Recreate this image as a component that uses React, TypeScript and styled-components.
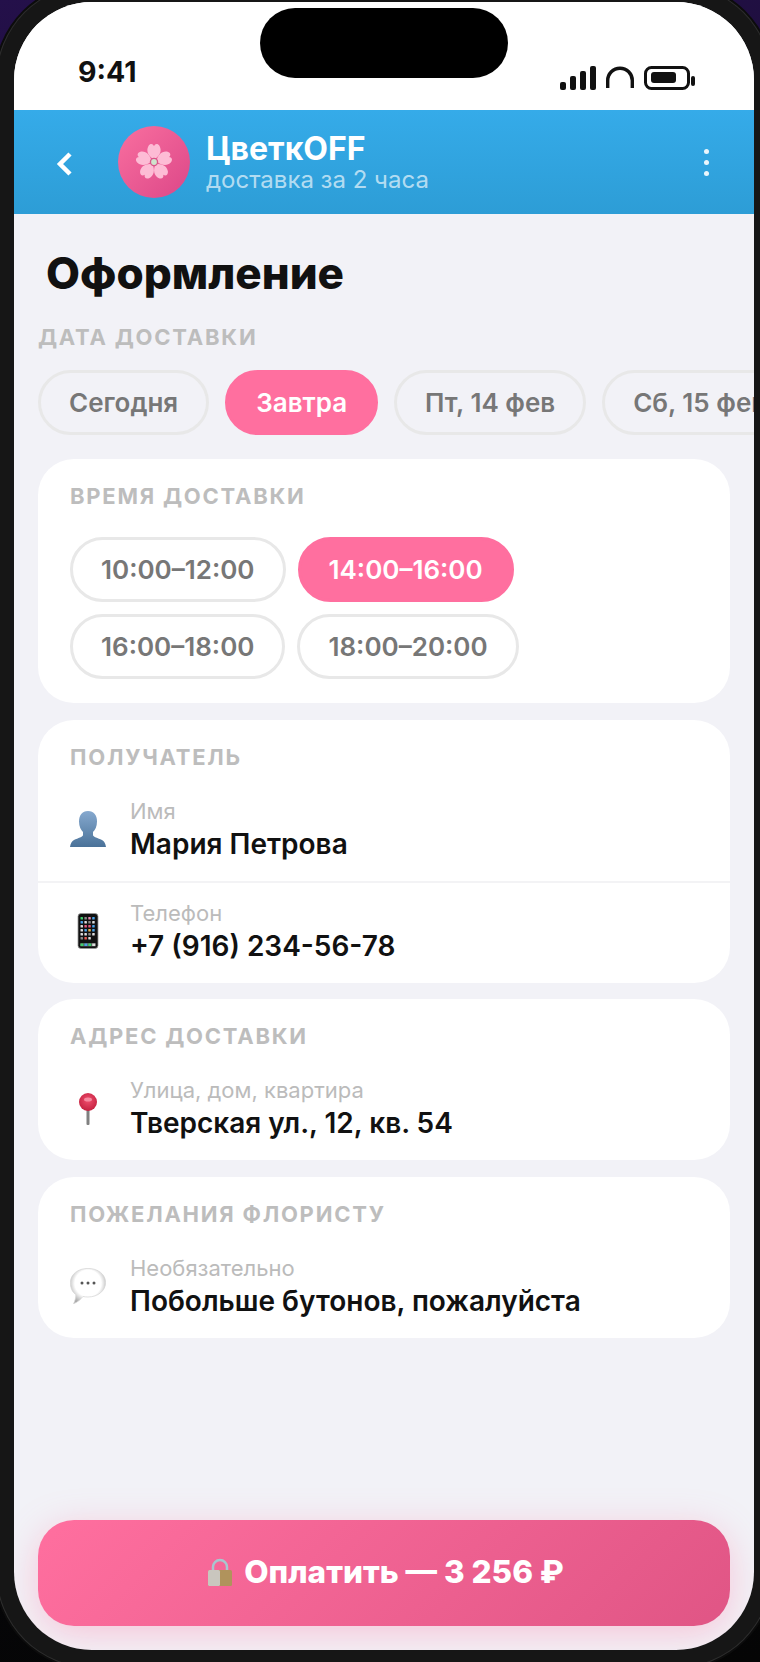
import React from "react";
import styled, { createGlobalStyle } from "styled-components";

const GlobalStyle = createGlobalStyle`
  html, body {
    margin: 0;
    padding: 0;
    background: #0a0a0a;
  }
  * {
    box-sizing: border-box;
  }
`;

const Stage = styled.div`
  width: 760px;
  height: 1662px;
  overflow: hidden;
  padding: 2px 6px 12px 14px;
  background: linear-gradient(172deg, #24104a 0%, #0a0a14 40%, #050505 100%);
  font-family: Inter, "Noto Sans", sans-serif;
`;

const Screen = styled.div`
  position: relative;
  width: 740px;
  height: 1648px;
  border-radius: 78px;
  overflow: hidden;
  display: flex;
  flex-direction: column;
  background: #f2f2f7;
  box-shadow: 0 0 0 17px #161616, 0 0 0 18px #2e2e2e, 0 0 0 20px #0c0c0c;
`;

const Island = styled.div`
  position: absolute;
  top: 6px;
  left: 246px;
  width: 248px;
  height: 70px;
  border-radius: 35px;
  background: #000;
`;

const StatusBar = styled.div`
  height: 108px;
  flex: none;
  background: #fff;
  padding: 0 59px 0 64px;
  display: flex;
  align-items: flex-start;
  justify-content: space-between;
`;

const Clock = styled.span`
  margin-top: 52px;
  font-size: 28.5px;
  line-height: 36px;
  font-weight: 700;
  color: #111;
`;

const StatusIcons = styled.svg`
  margin-top: 64px;
`;

const Header = styled.header`
  height: 104px;
  flex: none;
  display: flex;
  align-items: center;
  padding: 0 42px;
  background: linear-gradient(180deg, #35abe9 0%, #2d9dd6 100%);
`;

const BackIcon = styled.svg`
  flex: none;
  margin: 4px 44px 0 0;
`;

const Avatar = styled.div`
  width: 72px;
  height: 72px;
  flex: none;
  border-radius: 50%;
  display: flex;
  align-items: center;
  justify-content: center;
  background: linear-gradient(135deg, #f96f9f 0%, #dc4788 100%);
`;

const HeaderText = styled.div`
  flex: 1;
  margin: 1px 0 0 16px;
  display: flex;
  flex-direction: column;
`;

const BrandName = styled.span`
  font-size: 32px;
  line-height: 34px;
  font-weight: 700;
  color: #fff;
`;

const BrandSub = styled.span`
  font-size: 24px;
  line-height: 28px;
  color: rgba(255, 255, 255, 0.65);
`;

const MoreDots = styled.div`
  display: flex;
  flex-direction: column;
  gap: 6px;
  margin-right: 3px;

  i {
    display: block;
    width: 5px;
    height: 5px;
    border-radius: 50%;
    background: rgba(255, 255, 255, 0.9);
  }
`;

const Content = styled.main`
  flex: 1;
  display: flex;
  flex-direction: column;
  padding: 0 24px 24px;
`;

const PageTitle = styled.h1`
  margin: 33px 0 0 8px;
  font-size: 44px;
  line-height: 52px;
  font-weight: 800;
  color: #111;
`;

const SectionLabel = styled.div`
  font-size: 22px;
  line-height: 26px;
  font-weight: 700;
  letter-spacing: 1.76px;
  color: #bdbdbd;
`;

const DateLabel = styled(SectionLabel)`
  margin-top: 25px;
`;

const DateRow = styled.div`
  display: flex;
  gap: 16px;
  margin: 20px -24px 24px 0;
  overflow: hidden;
`;

const Chip = styled.div<{ $active?: boolean }>`
  flex: none;
  height: 65px;
  padding: 0 28px;
  display: flex;
  align-items: center;
  border-radius: 33px;
  border: 3px solid ${(p) => (p.$active ? "#ff6f9f" : "#e8e8e8")};
  background: ${(p) => (p.$active ? "#ff6f9f" : "transparent")};
  color: ${(p) => (p.$active ? "#fff" : "#777")};
  font-size: 26px;
  font-weight: 600;
`;

const Card = styled.section`
  background: #fff;
  border-radius: 36px;
  margin-bottom: 16.6px;
  padding-top: 24px;
`;

const CardLabel = styled(SectionLabel)`
  padding: 0 32px;
  margin-bottom: 11px;
`;

const SlotWrap = styled.div`
  display: flex;
  flex-wrap: wrap;
  gap: 12px;
  max-width: 520px;
  padding: 17px 32px 24px;
`;

const Row = styled.div<{ $divided?: boolean }>`
  display: flex;
  align-items: center;
  gap: 24px;
  padding: 16px 32px 19px;
  border-top: ${(p) => (p.$divided ? "2px solid #f3f3f5" : "none")};
`;

const RowIcon = styled.svg`
  flex: none;
`;

const RowText = styled.div`
  display: flex;
  flex-direction: column;
`;

const RowCaption = styled.span`
  font-size: 22px;
  line-height: 29px;
  color: #bbb;
`;

const RowValue = styled.span`
  font-size: 28px;
  line-height: 36px;
  font-weight: 600;
  color: #111;
`;

const PayButton = styled.button`
  margin-top: auto;
  height: 106px;
  flex: none;
  border: none;
  border-radius: 36px;
  padding: 0 0 3px 4px;
  display: flex;
  align-items: center;
  justify-content: center;
  gap: 12px;
  font-family: inherit;
  font-size: 31.5px;
  font-weight: 800;
  color: #fff;
  background: linear-gradient(135deg, #ff6f9f 0%, #e05585 100%);
  box-shadow: 0 8px 36px rgba(255, 111, 159, 0.34);
`;

const Flower = () => (
  <svg width="40" height="40" viewBox="0 0 36 36">
    {[0, 72, 144, 216, 288].map((a) => (
      <path
        key={a}
        d="M18 15.500C13 13 10.500 8 13 3.500 14.800 1 17 1.500 18 3.800 19 1.500 21.200 1 23 3.500 25.500 8 23 13 18 15.500Z"
        fill="#fdbcd5"
        transform={`rotate(${a} 18 18)`}
      />
    ))}
    <circle cx="18" cy="18" r="3.800" fill="#d8568a" />
    <circle cx="18" cy="18" r="2.600" fill="#cfe2cc" />
  </svg>
);

const PersonIcon = () => (
  <RowIcon width="36" height="36" viewBox="0 0 36 36">
    <defs>
      <linearGradient id="bust" x1="0" y1="0" x2="0" y2="1">
        <stop offset="0" stopColor="#86a9cf" />
        <stop offset="1" stopColor="#4a7299" />
      </linearGradient>
    </defs>
    <path
      d="M18 0c6 0 9 4.500 9 10.500 0 5-2 8.500-4 10.500v3c0 2 5 3 9 5 2 1 3.500 3.500 4 7H0c.5-3.500 2-6 4-7 4-2 9-3 9-5v-3c-2-2-4-5.500-4-10.500C9 4.500 12 0 18 0z"
      fill="url(#bust)"
    />
  </RowIcon>
);

const tiles = ["#3ecf6e", "#888", "#e88ab0", "#4aa3e8", "#4aa3e8", "#ddd", "#888", "#ddd", "#ddd", "#e85a80", "#e85a80", "#4aa3e8", "#ddd", "#4aa3e8", "#e8b84a", "#4aa3e8", "#ddd", "#ddd", "#888", "#ddd", "#888", "#e85a50", "#ddd", "#111"];

const PhoneIcon = () => (
  <RowIcon width="36" height="36" viewBox="0 0 36 36">
    <rect x="8" y="0.500" width="20" height="35" rx="3" fill="#111" stroke="#999" strokeWidth="0.8" />
    {tiles.map((c, i) => (
      <rect key={i} x={10.5 + (i % 4) * 3.9} y={4 + Math.floor(i / 4) * 4} width="2.500" height="2.500" rx="0.6" fill={c} />
    ))}
    <rect x="10" y="30" width="16" height="3.500" rx="1" fill="#555" />
    <rect x="10.500" y="30.500" width="3" height="2.500" fill="#3ecf6e" />
    <rect x="14.400" y="30.500" width="3" height="2.500" fill="#4aa3e8" />
    <rect x="18.300" y="30.500" width="3" height="2.500" fill="#3ecf6e" />
    <rect x="22.200" y="30.500" width="3" height="2.500" fill="#ddd" />
  </RowIcon>
);

const PinIcon = () => (
  <RowIcon width="36" height="36" viewBox="0 0 36 36">
    <defs>
      <radialGradient id="ball" cx="0.5" cy="0.4" r="0.6">
        <stop offset="0" stopColor="#f0506f" />
        <stop offset="1" stopColor="#c4203f" />
      </radialGradient>
    </defs>
    <rect x="16.500" y="14" width="3" height="20" rx="1" fill="#808080" />
    <circle cx="18" cy="11" r="9" fill="url(#ball)" />
    <ellipse cx="18" cy="8.500" rx="4" ry="2" fill="#f78aa0" />
  </RowIcon>
);

const BubbleIcon = () => (
  <RowIcon width="36" height="36" viewBox="0 0 36 36">
    <defs>
      <radialGradient id="bubble" cx="0.5" cy="0.42" r="0.6">
        <stop offset="0.62" stopColor="#fff" />
        <stop offset="1" stopColor="#a8a8a8" />
      </radialGradient>
    </defs>
    <path
      d="M18 0.400c10 0 17.600 6 17.600 14.100S28 29 18 29c-2 0-3.500-.2-5-.5C11 31 8 34 3.500 35.800c1.500-3 2.500-6 2.300-9.300C2 24 0.400 19.500 0.400 14.500 0.400 6.400 8 0.400 18 0.400z"
      fill="url(#bubble)"
      stroke="#d4d4d4"
      strokeWidth="0.7"
    />
    <circle cx="12" cy="15" r="1.500" fill="#555" />
    <circle cx="18" cy="15" r="1.500" fill="#555" />
    <circle cx="24" cy="15" r="1.500" fill="#555" />
  </RowIcon>
);

const LockIcon = () => (
  <svg width="24" height="28" viewBox="0 0 24 28">
    <path d="M5 13V9a7 7 0 0 1 14 0v4" fill="none" stroke="#a9c6cf" strokeWidth="2.500" />
    <rect x="0" y="12" width="24" height="16" rx="1.500" fill="#b0935c" />
    <rect x="0" y="12" width="12" height="16" rx="1.500" fill="#c9c6be" />
  </svg>
);

const App = () => {
  return (
    <>
      <GlobalStyle />
      <Stage>
        <Screen>
          <Island />
          <StatusBar>
            <Clock>9:41</Clock>
            <StatusIcons width="135" height="24" viewBox="0 0 135 24">
              <rect x="0" y="16" width="6" height="8" rx="2" fill="#111" />
              <rect x="10" y="10" width="6" height="14" rx="2" fill="#111" />
              <rect x="20" y="5" width="6" height="19" rx="2" fill="#111" />
              <rect x="30" y="0" width="6" height="24" rx="2" fill="#111" />
              <path d="M47.700 22v-7.500a12.300 12.300 0 0 1 24.600 0v7.500" fill="none" stroke="#111" strokeWidth="3.400" />
              <rect x="85.500" y="1.500" width="43" height="21" rx="6" fill="none" stroke="#111" strokeWidth="3" />
              <rect x="91" y="6" width="25" height="11" rx="3" fill="#111" />
              <rect x="131" y="10" width="4" height="10" rx="2" fill="#111" />
            </StatusIcons>
          </StatusBar>

          <Header>
            <BackIcon width="18" height="24" viewBox="0 0 18 24">
              <path d="M14 2L4 12l10 10" fill="none" stroke="#fff" strokeWidth="4.500" />
            </BackIcon>
            <Avatar>
              <Flower />
            </Avatar>
            <HeaderText>
              <BrandName>ЦветкOFF</BrandName>
              <BrandSub>доставка за 2 часа</BrandSub>
            </HeaderText>
            <MoreDots>
              <i />
              <i />
              <i />
            </MoreDots>
          </Header>

          <Content>
            <PageTitle>Оформление</PageTitle>
            <DateLabel>ДАТА ДОСТАВКИ</DateLabel>
            <DateRow>
              <Chip>Сегодня</Chip>
              <Chip $active>Завтра</Chip>
              <Chip>Пт, 14 фев</Chip>
              <Chip>Сб, 15 фев</Chip>
            </DateRow>

            <Card>
              <CardLabel>ВРЕМЯ ДОСТАВКИ</CardLabel>
              <SlotWrap>
                <Chip>10:00–12:00</Chip>
                <Chip $active>14:00–16:00</Chip>
                <Chip>16:00–18:00</Chip>
                <Chip>18:00–20:00</Chip>
              </SlotWrap>
            </Card>

            <Card>
              <CardLabel>ПОЛУЧАТЕЛЬ</CardLabel>
              <Row>
                <PersonIcon />
                <RowText>
                  <RowCaption>Имя</RowCaption>
                  <RowValue>Мария Петрова</RowValue>
                </RowText>
              </Row>
              <Row $divided>
                <PhoneIcon />
                <RowText>
                  <RowCaption>Телефон</RowCaption>
                  <RowValue>+7 (916) 234-56-78</RowValue>
                </RowText>
              </Row>
            </Card>

            <Card>
              <CardLabel>АДРЕС ДОСТАВКИ</CardLabel>
              <Row>
                <PinIcon />
                <RowText>
                  <RowCaption>Улица, дом, квартира</RowCaption>
                  <RowValue>Тверская ул., 12, кв. 54</RowValue>
                </RowText>
              </Row>
            </Card>

            <Card>
              <CardLabel>ПОЖЕЛАНИЯ ФЛОРИСТУ</CardLabel>
              <Row>
                <BubbleIcon />
                <RowText>
                  <RowCaption>Необязательно</RowCaption>
                  <RowValue>Побольше бутонов, пожалуйста</RowValue>
                </RowText>
              </Row>
            </Card>

            <PayButton>
              <LockIcon />
              Оплатить — 3 256 ₽
            </PayButton>
          </Content>
        </Screen>
      </Stage>
    </>
  );
};

export default App;
